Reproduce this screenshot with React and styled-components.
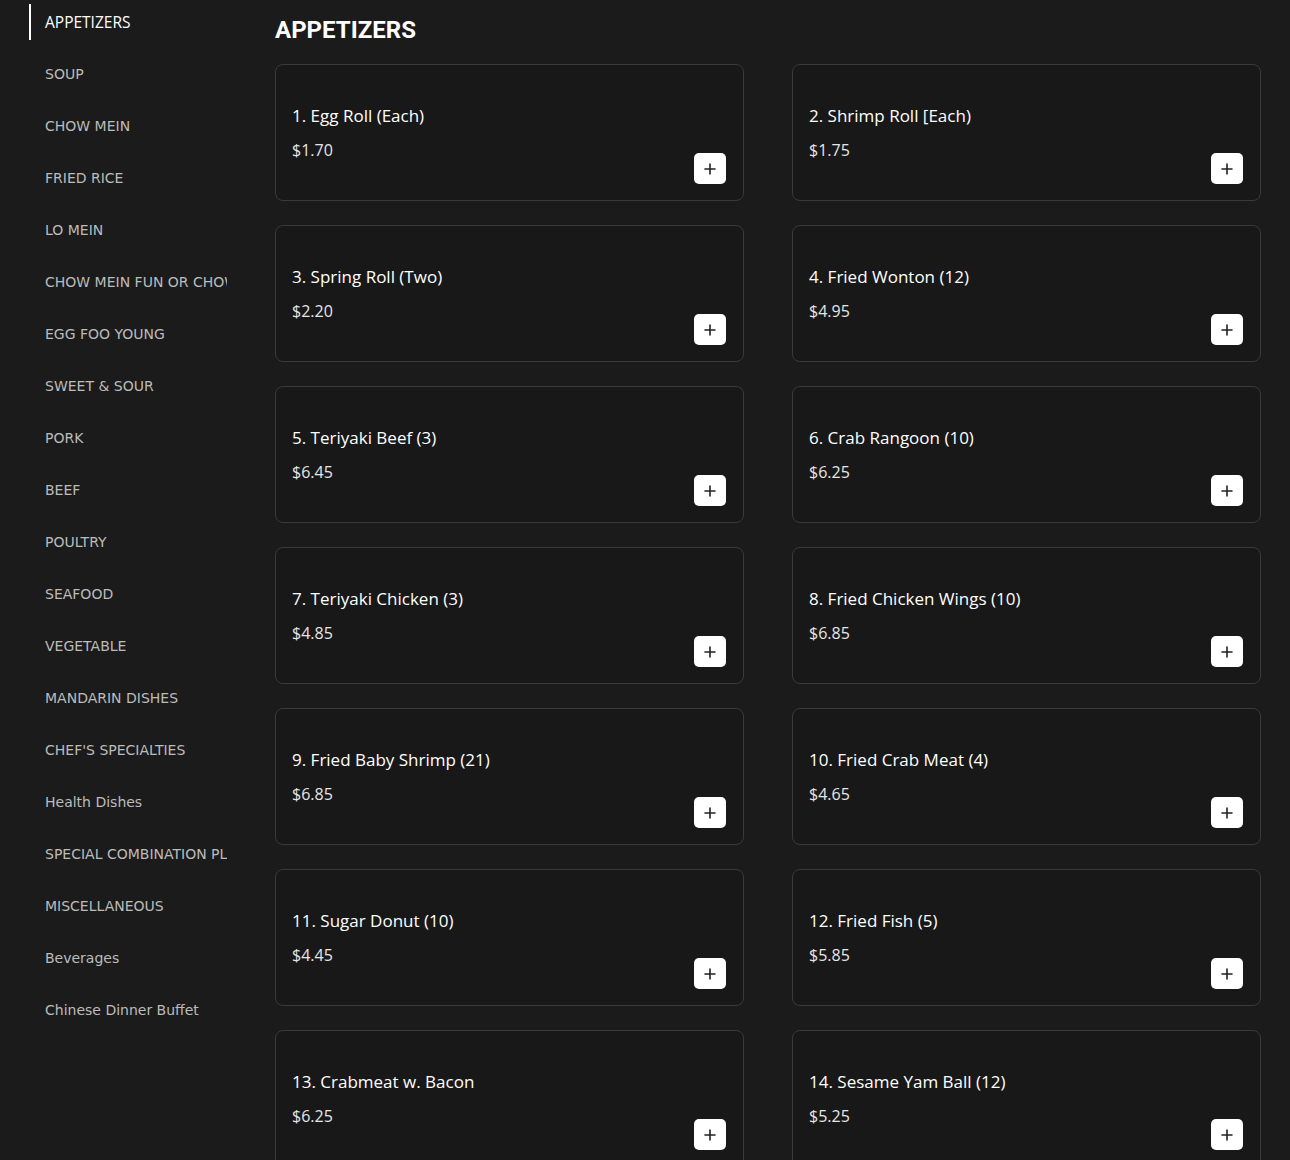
import styled, { createGlobalStyle } from "styled-components";

const GlobalStyle = createGlobalStyle`
  html, body {
    margin: 0;
    padding: 0;
    background: #1b1b1b;
  }
  * { box-sizing: border-box; }
`

const Page = styled.div`
  display: flex;
  align-items: flex-start;
  gap: 48px;
  padding: 4px 29px 0 29px;
  background: #1b1b1b;
  min-height: 1160px;
`

const Sidebar = styled.nav`
  display: flex;
  flex-direction: column;
  gap: 16px;
  width: 198px;
  flex-shrink: 0;
`

const NavItem = styled.a`
  display: flex;
  align-items: center;
  height: 36px;
  padding-left: 14px;
  border-left: 2px solid ${(p) => (p.$active ? "#ffffff" : "transparent")};
  color: ${(p) => (p.$active ? "#ffffff" : "#bcbcbc")};
  font-family: ${(p) => (p.$active ? '"Open Sans", sans-serif' : '"DejaVu Sans", sans-serif')};
  font-size: ${(p) => (p.$active ? "15.5px" : "14px")};
  font-weight: ${(p) => (p.$active ? 500 : 400)};
  text-decoration: none;
  white-space: nowrap;
  overflow: hidden;
  cursor: pointer;
`

const Main = styled.main`
  flex: 1;
  display: flex;
  flex-direction: column;
`

const Heading = styled.h1`
  margin: 10px 0 18px 0;
  font-family: Roboto, sans-serif;
  font-weight: 700;
  font-size: 24px;
  line-height: 32px;
  color: #ffffff;
`

const Grid = styled.div`
  display: grid;
  grid-template-columns: 1fr 1fr;
  column-gap: 48px;
  row-gap: 24px;
`

const Card = styled.div`
  display: flex;
  justify-content: space-between;
  align-items: flex-end;
  height: 137px;
  padding: 39px 17px 16px 16px;
  background: #181818;
  border: 1px solid #3a3a3a;
  border-radius: 8px;
`

const Info = styled.div`
  align-self: flex-start;
  display: flex;
  flex-direction: column;
  gap: 10px;
`

const Name = styled.div`
  font-family: "Open Sans", sans-serif;
  font-weight: 500;
  font-size: 17px;
  line-height: 24px;
  color: #ffffff;
`

const Price = styled.div`
  font-family: "Open Sans", sans-serif;
  font-size: 16px;
  line-height: 24px;
  color: #e6e6e6;
`

const AddButton = styled.button`
  display: flex;
  align-items: center;
  justify-content: center;
  width: 32px;
  height: 31px;
  padding: 0;
  border: none;
  border-radius: 5px;
  background: #ffffff;
  cursor: pointer;
`

const PlusIcon = () => (
  <svg width="12" height="12" viewBox="0 0 12 12">
    <path d="M6 1v10M1 6h10" stroke="#222" strokeWidth="1.6" strokeLinecap="round" />
  </svg>
)

const categories = [
  "APPETIZERS",
  "SOUP",
  "CHOW MEIN",
  "FRIED RICE",
  "LO MEIN",
  "CHOW MEIN FUN OR CHOW MEI FUN",
  "EGG FOO YOUNG",
  "SWEET & SOUR",
  "PORK",
  "BEEF",
  "POULTRY",
  "SEAFOOD",
  "VEGETABLE",
  "MANDARIN DISHES",
  "CHEF'S SPECIALTIES",
  "Health Dishes",
  "SPECIAL COMBINATION PLATES",
  "MISCELLANEOUS",
  "Beverages",
  "Chinese Dinner Buffet",
]

const items = [
  ["1. Egg Roll (Each)", "$1.70"],
  ["2. Shrimp Roll [Each)", "$1.75"],
  ["3. Spring Roll (Two)", "$2.20"],
  ["4. Fried Wonton (12)", "$4.95"],
  ["5. Teriyaki Beef (3)", "$6.45"],
  ["6. Crab Rangoon (10)", "$6.25"],
  ["7. Teriyaki Chicken (3)", "$4.85"],
  ["8. Fried Chicken Wings (10)", "$6.85"],
  ["9. Fried Baby Shrimp (21)", "$6.85"],
  ["10. Fried Crab Meat (4)", "$4.65"],
  ["11. Sugar Donut (10)", "$4.45"],
  ["12. Fried Fish (5)", "$5.85"],
  ["13. Crabmeat w. Bacon", "$6.25"],
  ["14. Sesame Yam Ball (12)", "$5.25"],
]

const App = () => {
  return (
    <>
      <GlobalStyle />
      <Page>
        <Sidebar>
          {categories.map((c, i) => (
            <NavItem key={c} $active={i === 0}>
              {c}
            </NavItem>
          ))}
        </Sidebar>
        <Main>
          <Heading>APPETIZERS</Heading>
          <Grid>
            {items.map(([name, price]) => (
              <Card key={name}>
                <Info>
                  <Name>{name}</Name>
                  <Price>{price}</Price>
                </Info>
                <AddButton aria-label="Add">
                  <PlusIcon />
                </AddButton>
              </Card>
            ))}
          </Grid>
        </Main>
      </Page>
    </>
  );
};

export default App;
